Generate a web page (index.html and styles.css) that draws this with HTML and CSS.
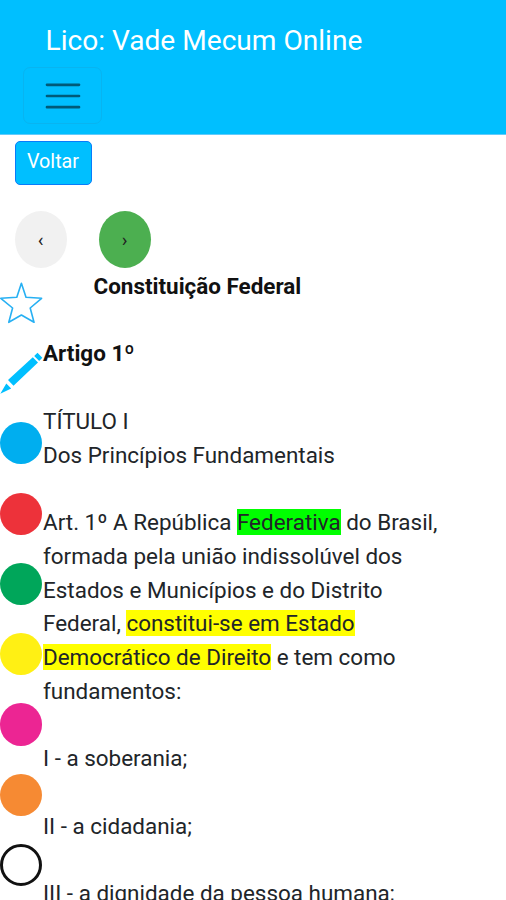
FILE: index.html
```html
<!DOCTYPE html>
<html lang="pt-BR">
<head>
<meta charset="utf-8">
<title>Lico: Vade Mecum Online</title>
<link rel="stylesheet" href="styles.css">
</head>
<body>
<header class="navbar">
  <div class="brand">Lico: Vade Mecum Online</div>
  <button class="toggler" aria-label="Menu">
    <svg width="42" height="42" viewBox="0 0 42 42"><path d="M5 9.800h32M5 21h32M5 32.200h32" stroke="#000" stroke-opacity=".53" stroke-width="2.700" stroke-linecap="round" fill="none"/></svg>
  </button>
</header>
<nav class="actions">
  <button class="back">Voltar</button>
  <div class="pager">
    <button class="round prev">‹</button>
    <button class="round next">›</button>
  </div>
</nav>
<main class="reader">
  <aside class="tools">
    <div class="tool"><svg width="43" height="44" viewBox="0 0 43 44"><path d="M21.400 2.200L26 16.300L41.600 17.300L30.200 27L34 41.300L21.400 34L8.800 41.300L12.600 27L0.800 17.300L16.800 16.300Z" fill="#fff" stroke="#27b0f3" stroke-width="1.600" stroke-linejoin="round"/></svg></div>
    <div class="tool"><svg width="43" height="44" viewBox="0 0 43 44"><path d="M37.500 1.800L42.300 6.800L39.200 10L34.200 5ZM32.800 6.300L38 11.600L13.500 34.800L8 29ZM6.300 32.500L11.200 37.600L0.300 42.800Z" fill="#00bfff"/></svg></div>
    <div class="tool"><span class="dot blue"></span></div>
    <div class="tool"><span class="dot red"></span></div>
    <div class="tool"><span class="dot green"></span></div>
    <div class="tool"><span class="dot yellow"></span></div>
    <div class="tool"><span class="dot pink"></span></div>
    <div class="tool"><span class="dot orange"></span></div>
    <div class="tool"><span class="dot clear"></span></div>
  </aside>
  <article class="law">
    <h1>Constituição Federal</h1>
    <h2>Artigo 1º</h2>
    <p>TÍTULO I<br>Dos Princípios Fundamentais</p>
    <p>Art. 1º A República <mark class="lime">Federativa</mark> do Brasil,<br>formada pela união indissolúvel dos<br>Estados e Municípios e do Distrito<br>Federal, <mark>constitui-se em Estado<br>Democrático de Direito</mark> e tem como<br>fundamentos:</p>
    <p>I - a soberania;</p>
    <p>II - a cidadania;</p>
    <p>III - a dignidade da pessoa humana;</p>
  </article>
</main>
</body>
</html>
```
FILE: styles.css
```css
* { box-sizing: border-box; }
body {
  margin: 0;
  height: 900px;
  overflow: hidden;
  background: #fff;
  color: #212529;
  font: 22.45px/33.75px Roboto, sans-serif;
}
button { font-family: inherit; padding: 0; }
.navbar {
  height: 135px;
  padding: 20px 23px 0;
  background: #00bfff;
  border-bottom: 1px solid #62cbfb;
}
.brand {
  padding-left: 22.500px;
  color: #fff;
  font-size: 28.100px;
  line-height: 42px;
  white-space: nowrap;
}
.toggler {
  display: flex;
  align-items: center;
  justify-content: center;
  width: 79px;
  height: 57px;
  margin-top: 5px;
  background: none;
  border: 1.500px solid #08b4f0;
  border-radius: 7px;
}
.actions {
  height: 132.600px;
  padding: 6px 14.500px 0;
}
.back {
  display: block;
  width: 77px;
  height: 44px;
  padding-bottom: 3px;
  background: #00bfff;
  border: 1.400px solid #087cfa;
  border-radius: 5px;
  color: #fff;
  font-size: 19.700px;
}
.pager {
  display: flex;
  gap: 32px;
  margin-top: 26px;
}
.round {
  width: 52px;
  height: 57px;
  border: 0;
  border-radius: 50%;
  color: #222;
  font-size: 19px;
}
.prev { background: #f1f1f1; }
.next { background: #4caf50; }
.reader {
  display: grid;
  grid-template-columns: 43px 1fr;
}
.tool {
  display: flex;
  align-items: center;
  height: 70.300px;
}
.tool svg { display: block; }
.dot {
  width: 42.200px;
  height: 42.200px;
  border-radius: 50%;
}
.blue { background: #00aeef; }
.red { background: #ed323a; }
.green { background: #00a65a; }
.yellow { background: #fff014; }
.pink { background: #ec2593; }
.orange { background: #f68a33; }
.clear { border: 3px solid #111; }
.law {
  padding-top: 2.200px;
  white-space: nowrap;
}
h1, h2, p { margin: 0 0 33.750px; }
h1, h2 {
  color: #111;
  font-size: 22.450px;
  font-weight: 700;
}
h1 { padding-left: 50.500px; }
mark { background: #ff0; color: inherit; }
.lime { background: #0f0; }
```
